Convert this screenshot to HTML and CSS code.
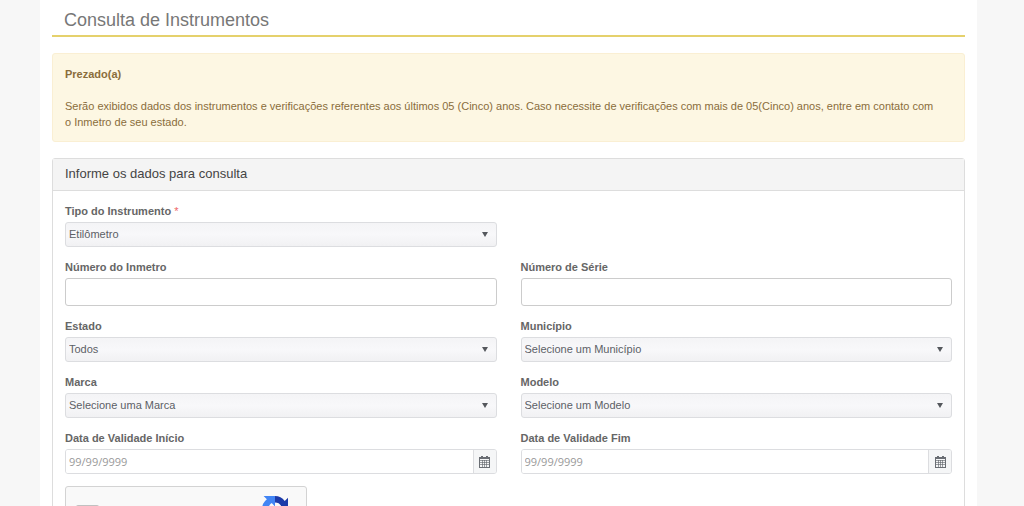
FILE: index.html
```html
<!DOCTYPE html>
<html lang="pt-BR">
<head>
<meta charset="utf-8">
<title>Consulta de Instrumentos</title>
<link rel="stylesheet" href="styles.css">
</head>
<body>
<main class="page">
  <h1 class="page-title">Consulta de Instrumentos</h1>
  <section class="alert">
    <strong>Prezado(a)</strong>
    <p>Serão exibidos dados dos instrumentos e verificações referentes aos últimos 05 (Cinco) anos. Caso necessite de verificações com mais de 05(Cinco) anos, entre em contato com o Inmetro de seu estado.</p>
  </section>
  <section class="panel">
    <h2 class="panel-heading">Informe os dados para consulta</h2>
    <form class="panel-body">
      <div class="field first">
        <label for="tipo">Tipo do Instrumento <span class="required">*</span></label>
        <div class="select"><select id="tipo"><option>Etilômetro</option></select></div>
      </div>
      <div class="field">
        <label for="inmetro">Número do Inmetro</label>
        <input class="text" id="inmetro" type="text">
      </div>
      <div class="field">
        <label for="serie">Número de Série</label>
        <input class="text" id="serie" type="text">
      </div>
      <div class="field">
        <label for="estado">Estado</label>
        <div class="select"><select id="estado"><option>Todos</option></select></div>
      </div>
      <div class="field">
        <label for="municipio">Município</label>
        <div class="select"><select id="municipio"><option>Selecione um Município</option></select></div>
      </div>
      <div class="field">
        <label for="marca">Marca</label>
        <div class="select"><select id="marca"><option>Selecione uma Marca</option></select></div>
      </div>
      <div class="field">
        <label for="modelo">Modelo</label>
        <div class="select"><select id="modelo"><option>Selecione um Modelo</option></select></div>
      </div>
      <div class="field">
        <label for="inicio">Data de Validade Início</label>
        <div class="date">
          <input id="inicio" type="text" placeholder="99/99/9999">
          <button type="button" aria-label="Abrir calendário">
            <svg width="11" height="12" viewBox="0 0 11 12"><path fill="#6a6e74" d="M0 1h2V0h2v1h3V0h2v1h2v11H0z"/><path fill="#f5f6f7" d="M1 3h9v8H1z"/><path stroke="#5c6066" stroke-opacity=".6" fill="none" d="M3.500 4v7M5.500 4v7M7.500 4v7M1 4.500h9M1 6.500h9M1 8.500h9"/></svg>
          </button>
        </div>
      </div>
      <div class="field">
        <label for="fim">Data de Validade Fim</label>
        <div class="date">
          <input id="fim" type="text" placeholder="99/99/9999">
          <button type="button" aria-label="Abrir calendário">
            <svg width="11" height="12" viewBox="0 0 11 12"><path fill="#6a6e74" d="M0 1h2V0h2v1h3V0h2v1h2v11H0z"/><path fill="#f5f6f7" d="M1 3h9v8H1z"/><path stroke="#5c6066" stroke-opacity=".6" fill="none" d="M3.500 4v7M5.500 4v7M7.500 4v7M1 4.500h9M1 6.500h9M1 8.500h9"/></svg>
          </button>
        </div>
      </div>
      <div class="captcha">
        <input type="checkbox" aria-label="Verificação">
        <svg class="captcha-logo" width="26" height="26" viewBox="0 0 64 64"><path fill="#1c3aa9" d="M64 32V4l-8 8A32 32 0 0 0 32 0v16c7 0 12 3 15 8l-9 8z"/><path fill="#4285f4" d="M32 0H4l8 8A32 32 0 0 0 0 32h16c0-7 3-12 8-15l8 9z"/><path fill="#ababab" d="M0 32v28l8-8a32 32 0 0 0 50-3L45 37a16 16 0 0 1-28 3l9-8z"/></svg>
      </div>
    </form>
  </section>
</main>
</body>
</html>
```
FILE: styles.css
```css
* {
  box-sizing: border-box;
}

html {
  scrollbar-width: none;
}

body {
  margin: 0;
  background: #f7f7f7;
  color: #666;
  font: 11px/16px "Liberation Sans", Arial, sans-serif;
}

.page {
  margin: 0 47px 0 40px;
  padding: 0 12px 24px;
  background: #fff;
}

.page-title {
  margin: 0 0 16px;
  padding: 8px 12px 3px;
  border-bottom: 2px solid #e5d16c;
  color: #777;
  font-size: 18px;
  font-weight: normal;
  line-height: 24px;
}

.alert {
  margin-bottom: 16px;
  padding: 12px 24px 11px 12px;
  border: 1px solid #faefd3;
  border-radius: 3px;
  background: #fdf7e3;
  color: #8a6d3b;
}

.alert p {
  margin: 16px 0 0;
}

.panel {
  border: 1px solid #ddd;
  border-radius: 3px;
}

.panel-heading {
  margin: 0;
  padding: 7px 12px 8px;
  border-bottom: 1px solid #ddd;
  background: #f4f4f4;
  color: #444;
  font-size: 13px;
  font-weight: normal;
  line-height: 16px;
}

.panel-body {
  display: grid;
  grid-template-columns: 1fr 1fr;
  gap: 12px 24px;
  padding: 12px;
}

.field {
  display: flex;
  flex-direction: column;
  gap: 3px;
}

.first {
  grid-column: 1;
}

.first + .field {
  grid-column: 1;
}

label {
  font-weight: bold;
}

.required {
  color: #e66;
  font-weight: normal;
}

.select {
  display: grid;
  align-items: center;
}

.select select {
  grid-area: 1 / 1;
  width: 100%;
  height: 25px;
  padding: 0 24px 2px 3px;
  appearance: none;
  border: 1px solid #dcdde0;
  border-radius: 3px;
  background: linear-gradient(#f4f4f6, #f8f8fa 50%, #f1f1f3);
  color: #5c6066;
  font: inherit;
}

.select::after {
  content: "";
  grid-area: 1 / 1;
  justify-self: end;
  margin-right: 9px;
  border: 3px solid transparent;
  border-top: 5px solid #55585d;
  border-bottom: 0;
  pointer-events: none;
}

.text {
  width: 100%;
  height: 28px;
  padding: 0 6px;
  border: 1px solid #ccc;
  border-radius: 3px;
  font: inherit;
}

.date {
  display: flex;
  height: 25px;
  border: 1px solid #dcdde0;
  border-radius: 3px;
  overflow: hidden;
}

.date input {
  flex: 1;
  min-width: 0;
  padding: 0 3px;
  border: 0;
  font: 11px/16px "Open Sans", sans-serif;
}

.date input::placeholder {
  color: #999;
}

.date button {
  display: flex;
  align-items: center;
  justify-content: center;
  width: 23px;
  padding: 0;
  border: 0;
  border-left: 1px solid #dcdde0;
  background: #f5f6f7;
}

.captcha {
  display: flex;
  align-items: flex-start;
  justify-content: space-between;
  width: 242px;
  height: 62px;
  padding: 9px 18px 0 10px;
  border: 1px solid #d3d3d3;
  border-radius: 3px;
  background: #f9f9f9;
}

.captcha input {
  width: 23px;
  height: 23px;
  margin: 9px 0 0;
  appearance: none;
  border: 2px solid #c1c1c1;
  border-radius: 2px;
  background: #fff;
}
```
